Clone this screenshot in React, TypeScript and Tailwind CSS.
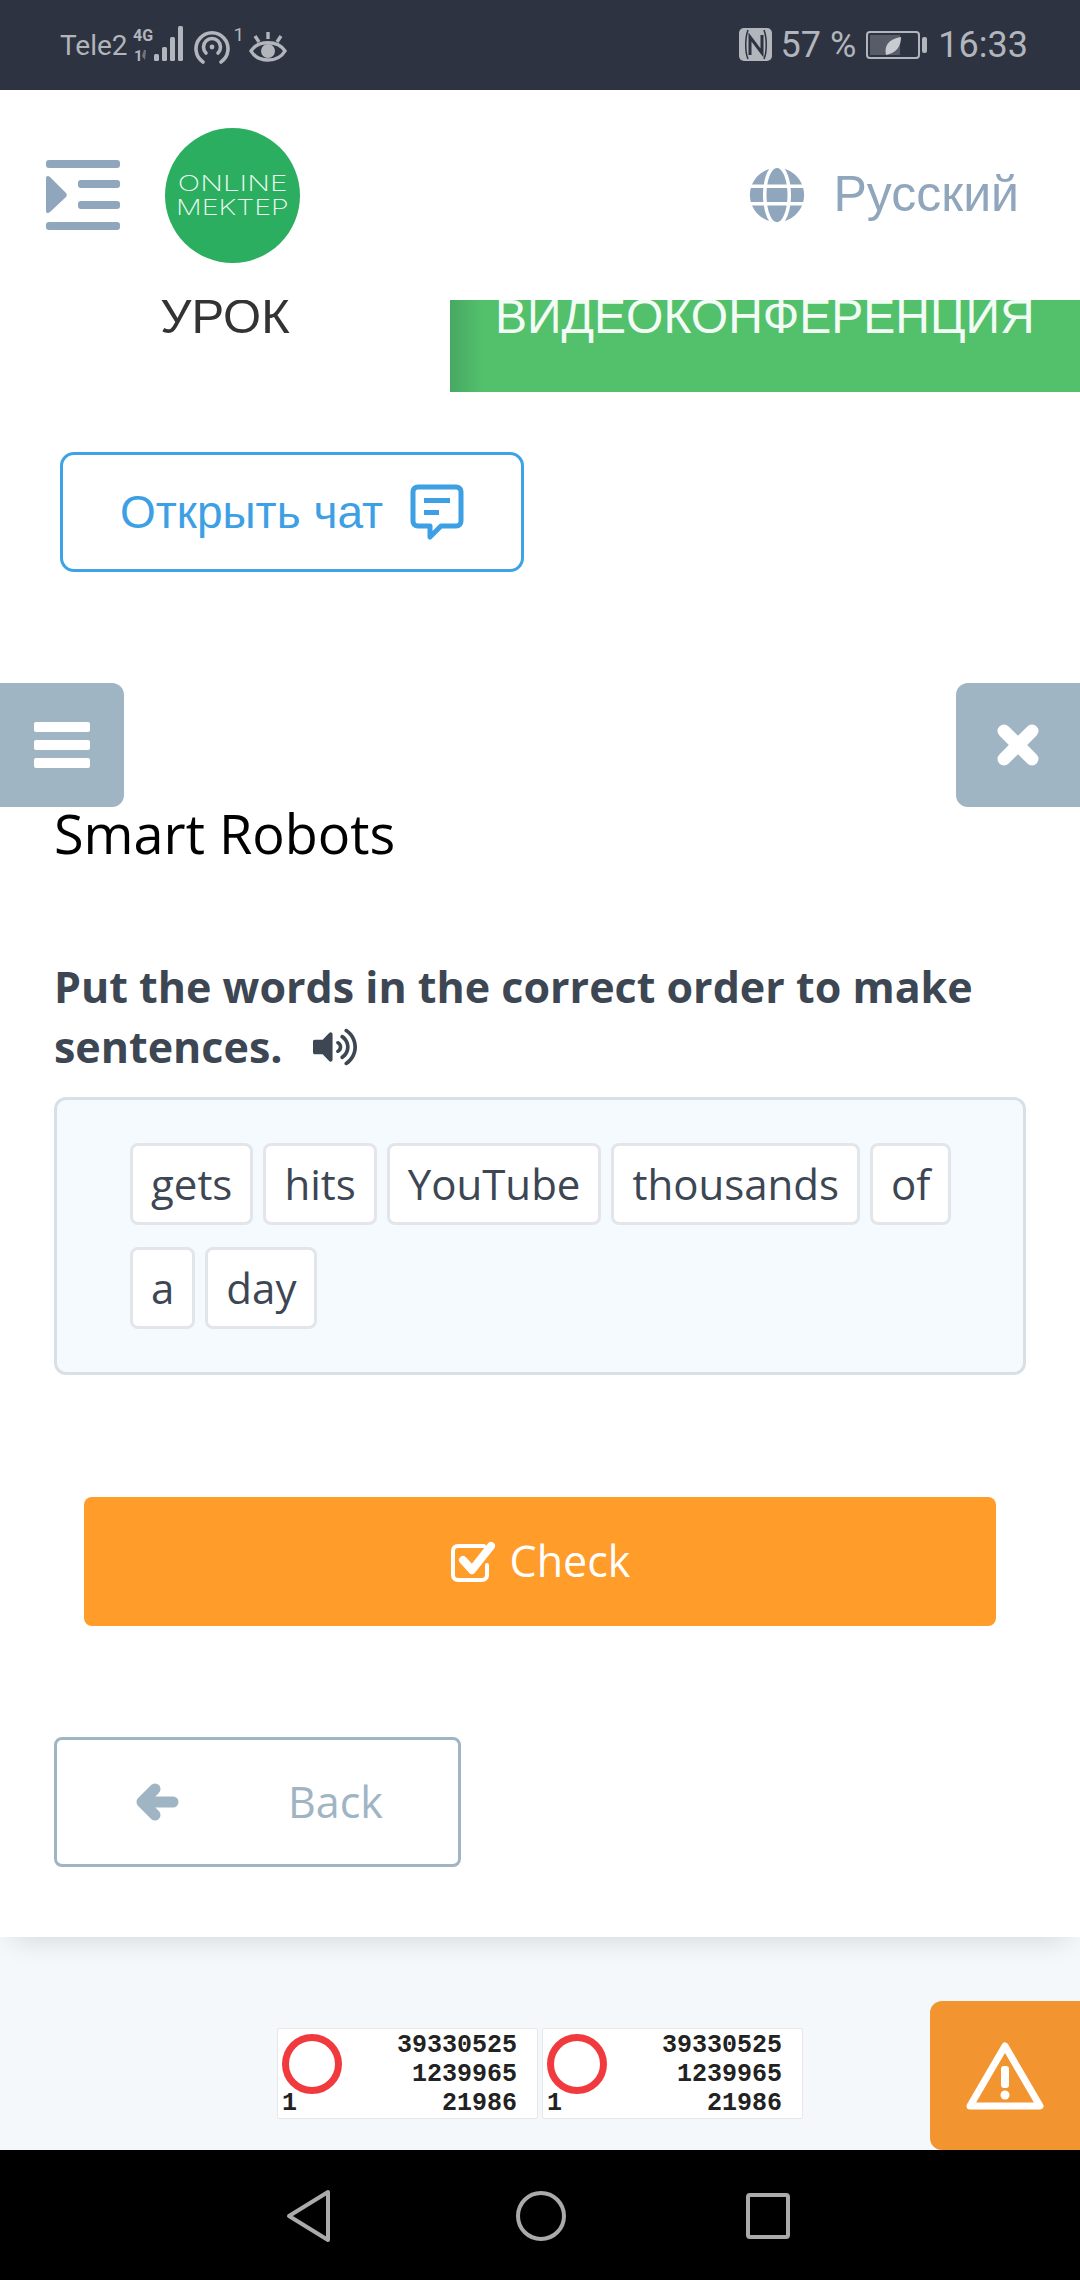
import { FaVolumeUp, FaGlobe } from "react-icons/fa"

const words = ["gets", "hits", "YouTube", "thousands", "of", "a", "day"]
const counterRows = ["39330525", "1239965", "21986"]

function StatusBar() {
  return (
    <div className="flex h-[90px] items-center justify-between bg-[#2d3340] pl-[60px] pr-[52px] font-['Roboto',sans-serif] text-[#b2b5bc]">
      <div className="flex items-center">
        <span className="mt-[2px] text-[28px] leading-none">Tele2</span>
        <svg width="60" height="38" viewBox="0 0 60 38" className="ml-[5px]" fill="#b2b5bc">
          <text x="0" y="15" fontSize="16" fontWeight="700" fontFamily="Roboto, sans-serif">4G</text>
          <text x="1" y="35" fontSize="15" fontWeight="700" fontFamily="Roboto, sans-serif">1</text>
          <path d="M11 24h2l-1 10-3-4z" opacity=".5" />
          <rect x="21" y="28" width="5" height="7" rx="1.5" />
          <rect x="29" y="21" width="5" height="14" rx="1.5" />
          <rect x="37" y="11" width="5" height="24" rx="1.5" />
          <rect x="45" y="0" width="5" height="35" rx="1.5" />
        </svg>
        <svg width="38" height="34" viewBox="0 0 38 34" className="mt-[4px]" fill="none" stroke="#b2b5bc" strokeWidth="3.6">
          <path d="M10 32A16 16 0 1 1 28 32" strokeLinecap="round" />
          <path d="M13 23A8.5 8.5 0 1 1 25 23" strokeLinecap="round" />
          <circle cx="19" cy="17" r="2.4" fill="#b2b5bc" stroke="none" />
        </svg>
        <span className="mb-[22px] ml-[3px] text-[19px] leading-none">1</span>
        <svg width="38" height="34" viewBox="0 0 38 34" className="ml-[5px] mt-[4px]" fill="none" stroke="#b2b5bc" strokeWidth="3.4">
          <path d="M2 21C9 10 29 10 36 21C29 33 9 33 2 21Z" />
          <circle cx="19" cy="21" r="7" fill="#b2b5bc" stroke="none" />
          <path d="M19 2v7M6 6l4 6M32 6l-4 6" />
        </svg>
      </div>
      <div className="flex items-center">
        <svg width="34" height="34" viewBox="0 0 34 34">
          <rect width="33" height="33" rx="5" fill="#b2b5bc" />
          <path d="M9 2C6 10 6 24 9 31M25 2C28 10 28 24 25 31" stroke="#2d3340" strokeWidth="1.5" fill="none" />
          <path d="M11 27V9L23 25V7" stroke="#2d3340" strokeWidth="3" fill="none" />
        </svg>
        <span className="ml-[8px] text-[36px] leading-none">57 %</span>
        <svg width="62" height="30" viewBox="0 0 62 30" className="ml-[10px]">
          <rect x="1" y="2" width="52" height="26" rx="3" fill="none" stroke="#b2b5bc" strokeWidth="2" />
          <rect x="4" y="5" width="30" height="20" fill="#585c68" />
          <rect x="56" y="7" width="5" height="16" rx="2" fill="#b2b5bc" />
          <path d="M20 25C18 16 22 9 35 7C35 17 30 23 20 25Z" fill="#c8cbd0" />
        </svg>
        <span className="ml-[10px] text-[36px] leading-none">16:33</span>
      </div>
    </div>
  )
}

function Header() {
  return (
    <div className="flex h-[210px] items-center justify-between pl-[46px] pr-[61px]">
      <div className="flex items-center gap-[45px]">
        <svg width="74" height="70" viewBox="0 0 74 70" fill="#8fa6bc">
          <rect x="0" y="0" width="74" height="8" rx="3" />
          <rect x="32" y="20" width="42" height="8" rx="3" />
          <rect x="32" y="41" width="42" height="8" rx="3" />
          <rect x="0" y="62" width="74" height="8" rx="3" />
          <path d="M0 18C0 16 2 15 4 17L20 33C21 34 21 36 20 37L4 52C2 54 0 53 0 51Z" />
        </svg>
        <div className="flex h-[135px] w-[135px] flex-col items-center justify-center rounded-full bg-[#2bae60] font-['Inter',sans-serif] text-[22px] font-extralight leading-[24px] text-[#eafaf0]">
          <span className="scale-x-[1.35]">ONLINE</span>
          <span className="scale-x-[1.3]">MEKTEP</span>
        </div>
      </div>
      <div className="flex items-center gap-[28px] font-['Liberation_Sans',sans-serif] text-[50px] leading-none text-[#8fa6bc]">
        <FaGlobe className="h-[56px] w-[56px]" />
        <span className="-mt-[3px]">Русский</span>
      </div>
    </div>
  )
}

function Tabs() {
  return (
    <div className="flex h-[92px] overflow-hidden font-['Liberation_Sans',sans-serif] text-[48px] leading-[56px]">
      <div className="w-[450px] text-center text-[#333333]">
        <div className="-mt-[12px] text-[49px]">УРОК</div>
      </div>
      <div className="flex-1 bg-[linear-gradient(90deg,#47a862,#53c06c_32px)] pl-[45px] text-[#f2fbf4]">
        <div className="-mt-[11px]">ВИДЕОКОНФЕРЕНЦИЯ</div>
      </div>
    </div>
  )
}

function Card() {
  return (
    <div className="relative z-10 bg-white pb-[70px] font-['Open_Sans',sans-serif] shadow-[0_14px_26px_-12px_rgba(0,0,0,0.14)]">
      <Header />
      <Tabs />
      <div className="pl-[60px] pt-[60px]">
        <button className="flex h-[120px] w-[464px] items-center gap-[26px] rounded-[14px] border-[3px] border-[#3ea3e6] pl-[57px] font-['Liberation_Sans',sans-serif] text-[46px] text-[#3ea0e4]">
          <span>Открыть чат</span>
          <svg width="56" height="56" viewBox="0 0 54 56" fill="none">
            <path d="M8 3H46C49 3 51 5 51 8V37C51 40 49 42 46 42H31L20 53V42H8C5 42 3 40 3 37V8C3 5 5 3 8 3Z" stroke="#3ea0e4" strokeWidth="5" strokeLinejoin="round" />
            <rect x="14" y="14" width="26" height="5" fill="#3ea0e4" />
            <rect x="14" y="26" width="15" height="5" fill="#3ea0e4" />
          </svg>
        </button>
      </div>
      <div className="px-[54px]">
        <h1 className="mt-[225px] text-[54px] font-normal leading-[72px] text-black">Smart Robots</h1>
        <p className="mt-[88px] text-[43px] font-bold leading-[60px] text-[#3d4653]">
          Put the words in the correct order to make sentences.
          <FaVolumeUp className="ml-[30px] inline-block h-[42px] w-[44px] align-[-5px]" />
        </p>
        <div className="mt-[20px] flex h-[278px] flex-wrap content-start gap-x-[10px] gap-y-[22px] rounded-[12px] border-[3px] border-[#d9e0e5] bg-[#f5fafe] pl-[73px] pr-[50px] pt-[43px]">
          {words.map((word) => (
            <span
              key={word}
              className="flex h-[82px] items-center rounded-[8px] border-[3px] border-[#e2e6ea] bg-white px-[18px] text-[42px] leading-none text-[#3d4653]"
            >
              {word}
            </span>
          ))}
        </div>
        <button className="mx-[30px] mt-[122px] flex h-[129px] w-[912px] items-center justify-center gap-[14px] rounded-[8px] bg-[#ff9c2a] text-[43px] text-white">
          <svg width="46" height="42" viewBox="0 0 46 42" fill="none" stroke="#ffffff" strokeLinecap="round" strokeLinejoin="round">
            <path d="M34 5H8C5 5 3 7 3 10V34C3 37 5 39 8 39H32C35 39 37 37 37 34V24" strokeWidth="4" />
            <path d="M13 19L22 29L41 5" strokeWidth="8" />
          </svg>
          <span>Check</span>
        </button>
        <button className="mt-[111px] flex h-[130px] w-[407px] items-center rounded-[8px] border-[3px] border-[#a0b5c3] pl-[78px] text-[43px] text-[#a0b5c3]">
          <svg width="44" height="40" viewBox="0 0 44 40" fill="none" stroke="#a0b5c3" strokeWidth="11" strokeLinecap="round" strokeLinejoin="round">
            <path d="M38 20H10" />
            <path d="M20 7L7 20L20 33" />
          </svg>
          <span className="ml-[109px]">Back</span>
        </button>
      </div>
    </div>
  )
}

function Counter() {
  return (
    <div className="relative h-[91px] w-[261px] rounded-[2px] border border-[#e6e8ea] bg-white pr-[20px] pt-[2px] text-right font-['Liberation_Mono',monospace] text-[25px] font-bold leading-[29px] text-[#222222]">
      {counterRows.map((row) => (
        <div key={row}>{row}</div>
      ))}
      <div className="absolute left-[4px] top-[5px] h-[60px] w-[60px] rounded-full border-[7px] border-[#f03a3e]" />
      <div className="absolute bottom-0 left-[4px]">1</div>
    </div>
  )
}

function NavBar() {
  return (
    <div className="flex h-[130px] items-center justify-center bg-black pr-[7px] pt-[2px]">
      <svg width="48" height="54" viewBox="0 0 48 54" fill="none" stroke="#aaaaaa" strokeWidth="4" strokeLinejoin="round">
        <path d="M45 3V51L6 27Z" />
      </svg>
      <svg width="52" height="52" viewBox="0 0 52 52" fill="none" stroke="#aaaaaa" strokeWidth="4" className="ml-[184px]">
        <circle cx="26" cy="26" r="23" />
      </svg>
      <svg width="44" height="46" viewBox="0 0 44 46" fill="none" stroke="#aaaaaa" strokeWidth="4" className="ml-[179px]">
        <rect x="2" y="2" width="40" height="42" rx="2" />
      </svg>
    </div>
  )
}

export default function App() {
  return (
    <div className="relative flex h-[2280px] w-[1080px] flex-col overflow-hidden bg-[#f5f8fb]">
      <StatusBar />
      <Card />
      <div className="flex flex-1 items-end justify-center gap-[4px] pb-[31px]">
        <Counter />
        <Counter />
      </div>
      <NavBar />

      {/* floating side buttons */}
      <div className="absolute left-0 top-[683px] z-20 flex h-[124px] w-[124px] flex-col items-center justify-center gap-[8px] rounded-r-[12px] bg-[#a0b5c3]">
        <div className="h-[10px] w-[56px] rounded-[2px] bg-white" />
        <div className="h-[10px] w-[56px] rounded-[2px] bg-white" />
        <div className="h-[10px] w-[56px] rounded-[2px] bg-white" />
      </div>
      <div className="absolute right-0 top-[683px] z-20 flex h-[124px] w-[124px] items-center justify-center rounded-l-[12px] bg-[#a0b5c3]">
        <svg width="44" height="44" viewBox="0 0 44 44" stroke="#ffffff" strokeWidth="13" strokeLinecap="round">
          <path d="M8 8L36 36M36 8L8 36" />
        </svg>
      </div>
      <div className="absolute bottom-[130px] right-0 z-20 flex h-[149px] w-[150px] items-center justify-center rounded-l-[12px] bg-[#f29530]">
        <svg width="78" height="70" viewBox="0 0 78 70" fill="none">
          <path d="M39 5L74 65H4Z" stroke="#ffffff" strokeWidth="7" strokeLinejoin="round" />
          <rect x="35" y="25" width="8" height="22" rx="3" fill="#ffffff" />
          <circle cx="39" cy="54" r="4.5" fill="#ffffff" />
        </svg>
      </div>
    </div>
  )
}
